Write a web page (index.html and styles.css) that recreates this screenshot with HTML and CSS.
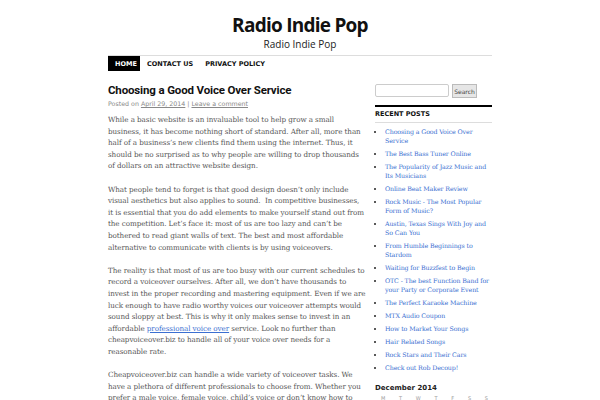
FILE: index.html
```html
<!DOCTYPE html>
<html>
<head>
<meta charset="utf-8">
<title>Radio Indie Pop</title>
<link rel="stylesheet" href="styles.css">
</head>
<body>
<div class="wrap">
  <header class="site-header">
    <h1 class="site-title">Radio Indie Pop</h1>
    <p class="site-desc">Radio Indie Pop</p>
  </header>
  <nav class="menu">
    <a class="current" href="#">Home</a>
    <a href="#">Contact Us</a>
    <a href="#">Privacy Policy</a>
  </nav>
  <div class="columns">
    <main class="content">
      <h2 class="entry-title">Choosing a Good Voice Over Service</h2>
      <div class="meta">Posted on <a href="#">April 29, 2014</a> | <a href="#">Leave a comment</a></div>
      <div class="entry">
        <p>While a basic website is an invaluable tool to help grow a small business, it has become nothing short of standard. After all, more than half of a business’s new clients find them using the internet. Thus, it should be no surprised as to why people are willing to drop thousands of dollars on an attractive website design.</p>
        <p>What people tend to forget is that good design doesn’t only include visual aesthetics but also applies to sound.&nbsp; In competitive businesses, it is essential that you do add elements to make yourself stand out from the competition. Let’s face it: most of us are too lazy and can’t be bothered to read giant walls of text. The best and most affordable alternative to communicate with clients is by using voiceovers.</p>
        <p>The reality is that most of us are too busy with our current schedules to record a voiceover ourselves. After all, we don’t have thousands to invest in the proper recording and mastering equipment. Even if we are luck enough to have radio worthy voices our voiceover attempts would sound sloppy at best. This is why it only makes sense to invest in an affordable <a href="#">professional voice over</a> service. Look no further than cheapvoiceover.biz to handle all of your voice over needs for a reasonable rate.</p>
        <p>Cheapvoiceover.biz can handle a wide variety of voiceover tasks. We have a plethora of different professionals to choose from. Whether you prefer a male voice, female voice, child’s voice or don’t know how to choose, we can help.</p>
      </div>
    </main>
    <aside class="sidebar">
      <form class="search">
        <input class="search-input" type="text">
        <button class="search-btn" type="button">Search</button>
      </form>
      <h3 class="widget-title">Recent Posts</h3>
      <ul class="recent">
        <li><a href="#">Choosing a Good Voice Over Service</a></li>
        <li><a href="#">The Best Bass Tuner Online</a></li>
        <li><a href="#">The Popularity of Jazz Music and Its Musicians</a></li>
        <li><a href="#">Online Beat Maker Review</a></li>
        <li><a href="#">Rock Music - The Most Popular Form of Music?</a></li>
        <li><a href="#">Austin, Texas Sings With Joy and So Can You</a></li>
        <li><a href="#">From Humble Beginnings to Stardom</a></li>
        <li><a href="#">Waiting for Buzzfest to Begin</a></li>
        <li><a href="#">OTC - The best Function Band for your Party or Corporate Event</a></li>
        <li><a href="#">The Perfect Karaoke Machine</a></li>
        <li><a href="#">MTX Audio Coupon</a></li>
        <li><a href="#">How to Market Your Songs</a></li>
        <li><a href="#">Hair Related Songs</a></li>
        <li><a href="#">Rock Stars and Their Cars</a></li>
        <li><a href="#">Check out Rob Decoup!</a></li>
      </ul>
      <div class="calendar">
        <div class="cal-caption">December 2014</div>
        <div class="cal-days"><span>M</span><span>T</span><span>W</span><span>T</span><span>F</span><span>S</span><span>S</span></div>
      </div>
    </aside>
  </div>
</div>
</body>
</html>
```
FILE: styles.css
```css
html, body {
  margin: 0;
  padding: 0;
  background: #fff;
}
body {
  font-family: "DejaVu Serif", serif;
  color: #555;
}
a { color: #3b6fd1; text-decoration: none; }
.wrap {
  width: 384px;
  margin: 0 auto;
}
.site-header {
  text-align: center;
  padding-top: 13px;
  border-bottom: 1px solid #ddd;
  padding-bottom: 4px;
}
.site-title {
  font-family: "Open Sans", "DejaVu Sans", sans-serif;
  font-weight: 700;
  font-size: 19px;
  line-height: 24px;
  margin: 0;
  color: #111;
  letter-spacing: -0.75px;
}
.site-desc {
  font-family: "Open Sans", "DejaVu Sans", sans-serif;
  font-size: 10px;
  line-height: 14px;
  margin: 0;
  color: #222;
}
.menu {
  display: flex;
  height: 15px;
  align-items: stretch;
}
.menu a {
  font-family: "DejaVu Sans", sans-serif;
  font-weight: 700;
  font-size: 6.5px;
  text-transform: uppercase;
  color: #111;
  padding: 0 6px;
  display: flex;
  align-items: center;
}
.menu a.current {
  background: #000;
  color: #fff;
  padding: 0 7px;
  width: 18px;
  margin-right: 1px;
}
.columns {
  display: flex;
  justify-content: space-between;
  margin-top: 12px;
}
.content {
  width: 258px;
}
.entry-title {
  font-family: "Roboto", "DejaVu Sans", sans-serif;
  font-weight: 700;
  font-size: 11.5px;
  letter-spacing: -0.15px;
  line-height: 15px;
  margin: 0;
  color: #111;
}
.meta {
  font-family: "DejaVu Sans", sans-serif;
  font-size: 6.3px;
  line-height: 12px;
  color: #888;
  margin-bottom: 4px;
}
.meta a { color: #888; text-decoration: underline; }
.entry p {
  margin: 0 0 11.6px;
  font-size: 7.2px;
  letter-spacing: -0.08px;
  line-height: 11.6px;
  color: #555;
}
.entry a { text-decoration: underline; }
.sidebar {
  width: 117px;
  padding-top: 1px;
}
.search {
  display: flex;
  gap: 3px;
  margin: 0;
}
.search-input {
  width: 74px;
  height: 13px;
  box-sizing: border-box;
  border: 1px solid #ccc;
  border-radius: 2px;
  padding: 0;
  margin: 0;
}
.search-btn {
  width: 25px;
  height: 14px;
  box-sizing: border-box;
  border: 1px solid #bbb;
  background: #e6e6e6;
  font-family: "DejaVu Sans", sans-serif;
  font-size: 6px;
  color: #444;
  padding: 0;
  margin: 0;
}
.widget-title {
  font-family: "DejaVu Sans", sans-serif;
  font-weight: 700;
  font-size: 6.5px;
  text-transform: uppercase;
  color: #111;
  margin: 7px 0 0;
  border-top: 2px solid #000;
  border-bottom: 1px solid #ddd;
  padding: 3px 0 3px;
  line-height: 9px;
}
.recent {
  margin: 4px 0 0;
  padding: 0 0 0 10px;
  list-style: disc;
}
.recent li {
  font-size: 6.3px;
  letter-spacing: -0.12px;
  line-height: 9px;
  margin-bottom: 4px;
  color: #222;
}
.calendar {
  margin-top: 11px;
}
.cal-caption {
  font-family: "DejaVu Sans", sans-serif;
  font-weight: 700;
  font-size: 7px;
  line-height: 10px;
  color: #222;
}
.cal-days {
  display: flex;
  justify-content: space-between;
  font-family: "DejaVu Sans", sans-serif;
  font-size: 5px;
  color: #999;
  padding: 2px 4px 0 6px;
}
```
